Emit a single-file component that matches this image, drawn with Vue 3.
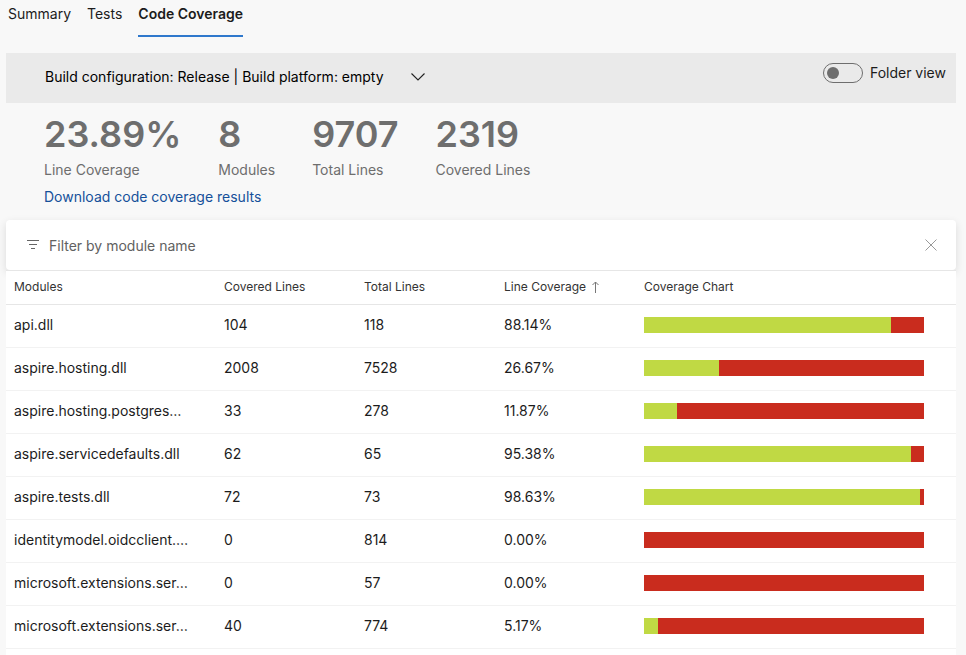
<script setup>
import { ref } from 'vue'

const tabs = ['Summary', 'Tests', 'Code Coverage']
const activeTab = ref('Code Coverage')
const folderView = ref(false)
const filter = ref('')

const stats = [
  { value: '23.89%', label: 'Line Coverage' },
  { value: '8', label: 'Modules' },
  { value: '9707', label: 'Total Lines' },
  { value: '2319', label: 'Covered Lines' },
]

const modules = [
  { name: 'api.dll', covered: 104, total: 118, coverage: 88.14 },
  { name: 'aspire.hosting.dll', covered: 2008, total: 7528, coverage: 26.67 },
  { name: 'aspire.hosting.postgres…', covered: 33, total: 278, coverage: 11.87 },
  { name: 'aspire.servicedefaults.dll', covered: 62, total: 65, coverage: 95.38 },
  { name: 'aspire.tests.dll', covered: 72, total: 73, coverage: 98.63 },
  { name: 'identitymodel.oidcclient.…', covered: 0, total: 814, coverage: 0 },
  { name: 'microsoft.extensions.ser…', covered: 0, total: 57, coverage: 0 },
  { name: 'microsoft.extensions.ser…', covered: 40, total: 774, coverage: 5.17 },
]
</script>

<template>
  <main class="page">
    <nav class="tabs">
      <a
        v-for="tab in tabs"
        :key="tab"
        href="#"
        class="tab"
        :class="{ active: tab === activeTab }"
        @click.prevent="activeTab = tab"
      >{{ tab }}</a>
    </nav>

    <section class="config">
      <div class="picker">
        <select class="picker-select" aria-label="Build configuration">
          <option>Build configuration: Release | Build platform: empty</option>
        </select>
        <svg class="picker-arrow" width="16" height="16" viewBox="0 0 16 16" aria-hidden="true">
          <path d="M1.5 4.5 8 11l6.5-6.5" fill="none" stroke="#222" stroke-width="1.1" />
        </svg>
      </div>
      <label class="toggle">
        <input v-model="folderView" type="checkbox" class="switch" />
        <span>Folder view</span>
      </label>
    </section>

    <section class="summary">
      <dl class="stats">
        <div v-for="stat in stats" :key="stat.label" class="stat">
          <dd class="stat-value">{{ stat.value }}</dd>
          <dt class="stat-label">{{ stat.label }}</dt>
        </div>
      </dl>
      <a href="#" class="download">Download code coverage results</a>
    </section>

    <div class="filter">
      <svg width="14" height="14" viewBox="0 0 14 14" aria-hidden="true">
        <path d="M1 2.5h12M3 6.5h8M5 10.5h4" fill="none" stroke="#666" />
      </svg>
      <input v-model="filter" type="text" class="filter-input" placeholder="Filter by module name" aria-label="Filter by module name" />
      <button type="button" class="clear" aria-label="Clear filter" @click="filter = ''">
        <svg width="14" height="14" viewBox="0 0 14 14" aria-hidden="true">
          <path d="m1.5 1.5 11 11m0-11-11 11" fill="none" stroke="#999" />
        </svg>
      </button>
    </div>

    <section class="panel">
      <table class="grid">
        <colgroup>
          <col class="col-name" />
          <col class="col-number" />
          <col class="col-number" />
          <col class="col-number" />
          <col />
        </colgroup>
        <thead>
          <tr>
            <th scope="col">Modules</th>
            <th scope="col">Covered Lines</th>
            <th scope="col">Total Lines</th>
            <th scope="col" aria-sort="ascending">
              <span class="sorted">
                Line Coverage
                <svg width="7" height="12" viewBox="0 0 7 12" aria-hidden="true">
                  <path d="M3.5 12V1M.5 4l3-3 3 3" fill="none" stroke="#777" />
                </svg>
              </span>
            </th>
            <th scope="col">Coverage Chart</th>
          </tr>
        </thead>
        <tbody>
          <tr v-for="(row, i) in modules" :key="i">
            <td>{{ row.name }}</td>
            <td>{{ row.covered }}</td>
            <td>{{ row.total }}</td>
            <td>{{ row.coverage.toFixed(2) }}%</td>
            <td class="chart-cell">
              <div class="bar">
                <div class="bar-covered" :style="{ width: row.coverage + '%' }"></div>
              </div>
            </td>
          </tr>
        </tbody>
      </table>
    </section>
  </main>
</template>

<style>
body {
  background: #f8f8f8;
}
</style>

<style scoped>
.page {
  box-sizing: border-box;
  display: flex;
  flex-direction: column;
  min-height: 100vh;
  padding: 0 10px 0 6px;
  font-family: Inter, "Liberation Sans", sans-serif;
  font-size: 14px;
  line-height: 20px;
  color: #1c1c1c;
}

.tabs {
  display: flex;
  gap: 16px;
  padding: 4px 2px 16px;
}

.tab {
  height: 31px;
  border-bottom: 2px solid transparent;
  color: inherit;
  text-decoration: none;
}

.tab.active {
  border-color: #2f78cc;
  font-weight: 600;
}

.config {
  display: flex;
  justify-content: space-between;
  align-items: flex-start;
  min-height: 28px;
  padding: 10px 10px 12px 39px;
  background: #eaeaea;
}

.picker {
  position: relative;
  padding-top: 2px;
}

.picker-select {
  appearance: none;
  height: 24px;
  padding: 0 42px 0 0;
  border: 0;
  background: transparent;
  color: #000;
  font: inherit;
}

.picker-arrow {
  position: absolute;
  top: 6px;
  right: 0;
  pointer-events: none;
}

.toggle {
  display: flex;
  align-items: center;
  gap: 7px;
}

.switch {
  appearance: none;
  box-sizing: border-box;
  display: flex;
  align-items: center;
  width: 40px;
  height: 20px;
  margin: 0;
  padding: 0 3px;
  border: 1px solid #6e6e6e;
  border-radius: 10px;
}

.switch::before {
  content: "";
  width: 12px;
  height: 12px;
  border-radius: 50%;
  background: #6e6e6e;
}

.switch:checked {
  justify-content: flex-end;
}

.summary {
  padding: 7px 38px 13px;
}

.stats {
  display: flex;
  gap: 37px;
  margin: 0;
  color: #6e6e6e;
}

.stat {
  display: flex;
  flex-direction: column;
}

.stat-value {
  margin: 0;
  font-size: 36px;
  font-weight: 600;
  line-height: 48px;
}

.stat-label {
  padding-top: 2px;
}

.download {
  display: block;
  padding-top: 7px;
  color: #15509a;
  text-decoration: none;
}

.filter {
  position: relative;
  display: flex;
  align-items: center;
  gap: 9px;
  height: 50px;
  padding: 0 18px 0 20px;
  border-radius: 4px;
  background: #fff;
  box-shadow: 0 3px 8px rgba(0, 0, 0, 0.12);
}

.filter-input {
  flex: 1;
  min-width: 0;
  padding: 2px 0 0;
  border: 0;
  outline: 0;
  background: transparent;
  color: inherit;
  font: inherit;
}

.filter-input::placeholder {
  color: #616161;
  opacity: 1;
}

.clear {
  display: flex;
  padding: 0;
  border: 0;
  background: transparent;
}

.panel {
  position: relative;
  flex: 1;
  border-top: 1px solid #e6e6e6;
  background: #fff;
}

.grid {
  width: 100%;
  table-layout: fixed;
  border-collapse: separate;
  border-spacing: 0;
}

.col-name {
  width: 210px;
}

.col-number {
  width: 140px;
}

th,
td {
  padding: 0 8px 2px;
  text-align: left;
  white-space: nowrap;
}

th {
  height: 31px;
  border-bottom: 1px solid #e6e6e6;
  color: #333;
  font-size: 12px;
  font-weight: 400;
}

td {
  height: 40px;
  border-bottom: 1px solid #f2f2f2;
}

.sorted {
  display: flex;
  align-items: center;
  gap: 6px;
}

.chart-cell {
  padding-right: 32px;
}

.bar {
  height: 16px;
  background: #c92c1e;
}

.bar-covered {
  height: 100%;
  background: #c0d944;
}
</style>
